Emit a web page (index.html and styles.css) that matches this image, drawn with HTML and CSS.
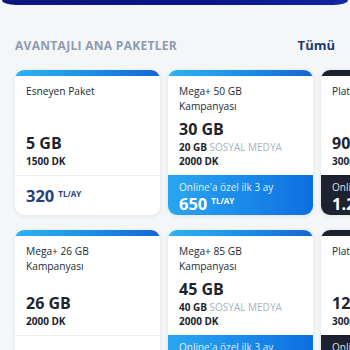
FILE: index.html
```html
<!DOCTYPE html>
<html lang="tr">
<head>
<meta charset="utf-8">
<link rel="stylesheet" href="styles.css">
</head>
<body>
<div class="banner"></div>
<section class="packages">
  <header class="head">
    <h2 class="head-title">AVANTAJLI ANA PAKETLER</h2>
    <a class="head-link">Tümü</a>
  </header>
  <div class="grid">
    <article class="card">
      <div class="strip"></div>
      <div class="body">
        <div class="name">Esneyen Paket</div>
        <div class="specs">
          <div class="gb">5 GB</div>
          <div class="sub">1500 DK</div>
        </div>
      </div>
      <div class="foot plain"><span class="price">320</span><span class="unit">TL/AY</span></div>
    </article>
    <article class="card">
      <div class="strip"></div>
      <div class="body">
        <div class="name">Mega+ 50 GB<br>Kampanyası</div>
        <div class="specs">
          <div class="gb">30 GB</div>
          <div class="sub">20 GB <span class="social">SOSYAL MEDYA</span></div>
          <div class="sub">2000 DK</div>
        </div>
      </div>
      <div class="foot promo">
        <div class="note">Online'a özel ilk 3 ay</div>
        <div class="promo-price"><span class="price">650</span><span class="unit">TL/AY</span></div>
      </div>
    </article>
    <article class="card dark">
      <div class="strip"></div>
      <div class="body">
        <div class="name">Platinum 90 GB</div>
        <div class="specs">
          <div class="gb">90 GB</div>
          <div class="sub">3000 DK</div>
        </div>
      </div>
      <div class="foot promo">
        <div class="note">Online'a özel ilk 3 ay</div>
        <div class="promo-price"><span class="price">1.250</span><span class="unit">TL/AY</span></div>
      </div>
    </article>

    <article class="card">
      <div class="strip"></div>
      <div class="body">
        <div class="name">Mega+ 26 GB<br>Kampanyası</div>
        <div class="specs">
          <div class="gb">26 GB</div>
          <div class="sub">2000 DK</div>
        </div>
      </div>
      <div class="foot plain"><span class="price">450</span><span class="unit">TL/AY</span></div>
    </article>
    <article class="card">
      <div class="strip"></div>
      <div class="body">
        <div class="name">Mega+ 85 GB<br>Kampanyası</div>
        <div class="specs">
          <div class="gb">45 GB</div>
          <div class="sub">40 GB <span class="social">SOSYAL MEDYA</span></div>
          <div class="sub">2000 DK</div>
        </div>
      </div>
      <div class="foot promo">
        <div class="note">Online'a özel ilk 3 ay</div>
        <div class="promo-price"><span class="price">750</span><span class="unit">TL/AY</span></div>
      </div>
    </article>
    <article class="card dark">
      <div class="strip"></div>
      <div class="body">
        <div class="name">Platinum 120 GB</div>
        <div class="specs">
          <div class="gb">120 GB</div>
          <div class="sub">3000 DK</div>
        </div>
      </div>
      <div class="foot promo">
        <div class="note">Online'a özel ilk 3 ay</div>
        <div class="promo-price"><span class="price">1.450</span><span class="unit">TL/AY</span></div>
      </div>
    </article>
  </div>
</section>
</body>
</html>
```
FILE: styles.css
```css
html, body {
  margin: 0;
  padding: 0;
  background: #f4f6f8;
  overflow: hidden;
}
body {
  font-family: "Open Sans", Lato, sans-serif;
  color: #1d2430;
  width: 350px;
  height: 350px;
}
.banner {
  height: 5px;
  margin: 0 2px;
  background: linear-gradient(90deg, #0b1580 0%, #0a1886 60%, #1126a6 100%);
  border-radius: 0 0 14px 14px / 0 0 5px 5px;
}
.packages {
  padding: 0 0 0 15px;
  overflow: hidden;
}
.head {
  display: flex;
  justify-content: space-between;
  align-items: center;
  padding: 30px 15px 0 0;
  height: 20px;
}
.head-title {
  margin: 0;
  font-size: 12px;
  font-weight: 700;
  letter-spacing: 0.3px;
  color: #8f9bb0;
}
.head-link {
  font-size: 13px;
  font-weight: 700;
  color: #1e3a72;
}
.grid {
  display: grid;
  grid-template-columns: repeat(3, 145px);
  grid-auto-rows: 145px;
  align-items: start;
  column-gap: 8px;
  row-gap: 15px;
  margin-top: 15px;
  width: 460px;
}
.card {
  background: #fff;
  border-radius: 9px;
  overflow: hidden;
  height: 145px;
  box-shadow: 0 1px 5px rgba(30, 45, 70, 0.09);
}
.strip {
  height: 6px;
  background: linear-gradient(90deg, #2bb4f2 0%, #1c8ce6 55%, #1466d4 100%);
}
.dark .strip {
  background: #1d2230;
}
.body {
  height: 99px;
  box-sizing: border-box;
  padding: 8px 11px 7px;
  display: flex;
  flex-direction: column;
}
.name {
  font-size: 10.2px;
  line-height: 15px;
  color: #222a36;
}
.specs {
  margin-top: auto;
}
.gb {
  font-size: 16px;
  font-weight: 700;
  line-height: 20px;
  margin-bottom: 1px;
}
.sub {
  font-size: 10px;
  font-weight: 700;
  line-height: 14px;
}
.social {
  font-weight: 400;
  color: #a9b2be;
}
.foot {
  height: 40px;
  box-sizing: border-box;
  padding: 0 11px;
}
.plain {
  border-top: 1px solid #eceff3;
  display: flex;
  align-items: center;
  color: #26407c;
}
.promo {
  background: linear-gradient(90deg, #2aa6ef 0%, #1b8be9 50%, #0d6fdf 100%);
  color: #fff;
  padding-top: 5px;
}
.dark .promo {
  background: #1d2230;
}
.note {
  font-size: 10px;
  line-height: 14px;
  color: rgba(255, 255, 255, 0.88);
}
.promo-price {
  display: flex;
  line-height: 20px;
}
.price {
  font-size: 16.5px;
  font-weight: 700;
}
.unit {
  font-size: 8px;
  font-weight: 700;
  margin-left: 4px;
  align-self: flex-start;
  line-height: 1;
  padding-top: 3px;
}
.plain .unit {
  margin-top: -6px;
  align-self: center;
}
```
